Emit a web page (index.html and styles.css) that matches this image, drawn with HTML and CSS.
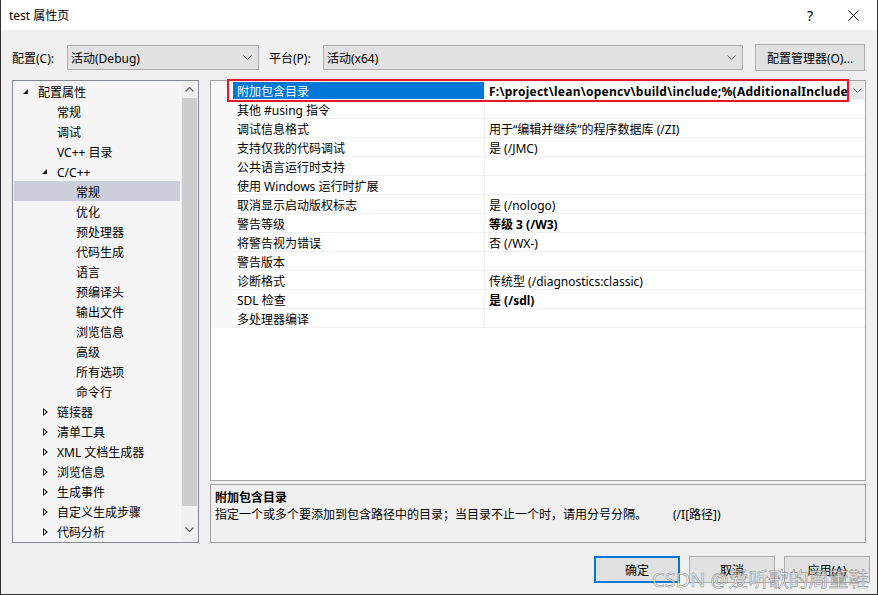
FILE: index.html
```html
<!DOCTYPE html>
<html lang="zh-CN">
<head>
    <meta charset="UTF-8">
    <title>test 属性页</title>
    <link rel="stylesheet" href="styles.css">
</head>
<body>
<div class="window">
    <div class="titlebar">
        <span class="title">test 属性页</span>
        <span class="help">?</span>
        <svg class="close" width="11" height="11" viewBox="0 0 11 11"><path d="M0.5 0.5 L10.5 10.5 M10.5 0.5 L0.5 10.5" stroke="#000" stroke-width="1" fill="none"/></svg>
    </div>

    <div class="toolbar">
        <span class="lbl lbl-config">配置(C):</span>
        <div class="combo combo-config">
            <span>活动(Debug)</span>
            <svg width="9" height="5" viewBox="0 0 9 5"><path d="M0.5 0.5 L4.5 4.5 L8.5 0.5" stroke="#606060" fill="none"/></svg>
        </div>
        <span class="lbl lbl-platform">平台(P):</span>
        <div class="combo combo-platform">
            <span>活动(x64)</span>
            <svg width="9" height="5" viewBox="0 0 9 5"><path d="M0.5 0.5 L4.5 4.5 L8.5 0.5" stroke="#606060" fill="none"/></svg>
        </div>
        <button class="btn btn-manager">配置管理器(O)...</button>
    </div>

    <div class="main">
        <div class="tree">
            <ul class="tree-list">
                <li class="node lv0"><span class="arrow open"></span>配置属性</li>
                <li class="node lv1"><span class="arrow"></span>常规</li>
                <li class="node lv1"><span class="arrow"></span>调试</li>
                <li class="node lv1"><span class="arrow"></span>VC++ 目录</li>
                <li class="node lv1"><span class="arrow open"></span>C/C++</li>
                <li class="node lv2 selected"><span class="arrow"></span>常规</li>
                <li class="node lv2"><span class="arrow"></span>优化</li>
                <li class="node lv2"><span class="arrow"></span>预处理器</li>
                <li class="node lv2"><span class="arrow"></span>代码生成</li>
                <li class="node lv2"><span class="arrow"></span>语言</li>
                <li class="node lv2"><span class="arrow"></span>预编译头</li>
                <li class="node lv2"><span class="arrow"></span>输出文件</li>
                <li class="node lv2"><span class="arrow"></span>浏览信息</li>
                <li class="node lv2"><span class="arrow"></span>高级</li>
                <li class="node lv2"><span class="arrow"></span>所有选项</li>
                <li class="node lv2"><span class="arrow"></span>命令行</li>
                <li class="node lv1"><span class="arrow closed"></span>链接器</li>
                <li class="node lv1"><span class="arrow closed"></span>清单工具</li>
                <li class="node lv1"><span class="arrow closed"></span>XML 文档生成器</li>
                <li class="node lv1"><span class="arrow closed"></span>浏览信息</li>
                <li class="node lv1"><span class="arrow closed"></span>生成事件</li>
                <li class="node lv1"><span class="arrow closed"></span>自定义生成步骤</li>
                <li class="node lv1"><span class="arrow closed"></span>代码分析</li>
            </ul>
            <div class="vscroll">
                <svg class="sb-arrow" width="9" height="5" viewBox="0 0 9 5"><path d="M0.5 4.5 L4.5 0.5 L8.5 4.5" stroke="#606060" stroke-width="1.3" fill="none"/></svg>
                <div class="sb-thumb"></div>
                <svg class="sb-arrow" width="9" height="5" viewBox="0 0 9 5"><path d="M0.5 0.5 L4.5 4.5 L8.5 0.5" stroke="#606060" stroke-width="1.3" fill="none"/></svg>
            </div>
        </div>

        <div class="right">
            <div class="grid">
                <div class="prop active">
                    <span class="gutter"></span>
                    <span class="name">附加包含目录</span>
                    <span class="value bold">
                        <span class="value-text">F:\project\lean\opencv\build\include;%(AdditionalInclude</span>
                        <span class="drop"><svg width="9" height="5" viewBox="0 0 9 5"><path d="M0.5 0.5 L4.5 4.5 L8.5 0.5" stroke="#606060" fill="none"/></svg></span>
                    </span>
                </div>
                <div class="prop"><span class="gutter"></span><span class="name">其他 #using 指令</span><span class="value"></span></div>
                <div class="prop"><span class="gutter"></span><span class="name">调试信息格式</span><span class="value">用于“编辑并继续”的程序数据库 (/ZI)</span></div>
                <div class="prop"><span class="gutter"></span><span class="name">支持仅我的代码调试</span><span class="value">是 (/JMC)</span></div>
                <div class="prop"><span class="gutter"></span><span class="name">公共语言运行时支持</span><span class="value"></span></div>
                <div class="prop"><span class="gutter"></span><span class="name">使用 Windows 运行时扩展</span><span class="value"></span></div>
                <div class="prop"><span class="gutter"></span><span class="name">取消显示启动版权标志</span><span class="value">是 (/nologo)</span></div>
                <div class="prop"><span class="gutter"></span><span class="name">警告等级</span><span class="value bold">等级 3 (/W3)</span></div>
                <div class="prop"><span class="gutter"></span><span class="name">将警告视为错误</span><span class="value">否 (/WX-)</span></div>
                <div class="prop"><span class="gutter"></span><span class="name">警告版本</span><span class="value"></span></div>
                <div class="prop"><span class="gutter"></span><span class="name">诊断格式</span><span class="value">传统型 (/diagnostics:classic)</span></div>
                <div class="prop"><span class="gutter"></span><span class="name">SDL 检查</span><span class="value bold">是 (/sdl)</span></div>
                <div class="prop"><span class="gutter"></span><span class="name">多处理器编译</span><span class="value"></span></div>
                <div class="highlight"></div>
            </div>
            <div class="desc">
                <div class="desc-title">附加包含目录</div>
                <div class="desc-text">指定一个或多个要添加到包含路径中的目录；当目录不止一个时，请用分号分隔。<span class="switch">(/I[路径])</span></div>
            </div>
        </div>
    </div>

    <div class="footer">
        <button class="btn btn-ok">确定</button>
        <button class="btn">取消</button>
        <button class="btn">应用(A)</button>
    </div>

    <div class="watermark">CSDN @爱听歌的周董鞋</div>
</div>
</body>
</html>
```

FILE: styles.css
```css
* {
    box-sizing: border-box;
}
body {
    margin: 0;
    font-family: "Noto Sans", "Noto Sans CJK SC", sans-serif;
    font-size: 12px;
    color: #000;
}
.window {
    position: relative;
    width: 878px;
    height: 595px;
    background: #f0f0f0;
    border-left: 1px solid #2e2e2e;
    border-right: 1px solid #2e2e2e;
    border-bottom: 1px solid #2e2e2e;
    overflow: hidden;
}

/* title bar */
.titlebar {
    height: 30px;
    background: #fff;
    display: flex;
    align-items: center;
    padding-left: 8px;
}
.title {
    flex: 1;
}
.help {
    font-size: 14px;
    margin-right: 35px;
}
.close {
    margin-right: 18px;
}

/* toolbar */
.toolbar {
    display: flex;
    align-items: center;
    margin-top: 14px;
    height: 27px;
    padding-left: 11px;
}
.lbl-config {
    width: 55px;
}
.lbl-platform {
    width: 54px;
    margin-left: 10px;
}
.combo {
    height: 25px;
    background: #e1e1e1;
    border: 1px solid #adadad;
    display: flex;
    align-items: center;
    justify-content: space-between;
    padding: 0 6px 0 3px;
}
.combo-config {
    width: 192px;
}
.combo-platform {
    width: 420px;
}
.btn {
    font-family: inherit;
    font-size: 12px;
    color: #000;
    background: #e1e1e1;
    border: 1px solid #adadad;
    padding: 0;
    height: 27px;
}
.btn-manager {
    width: 110px;
    margin-left: 12px;
}

/* main area */
.main {
    display: flex;
    margin-top: 9px;
    padding-left: 11px;
    height: 463px;
}
.tree {
    width: 187px;
    height: 463px;
    border: 1px solid #828790;
    background: #f5f5f5;
    display: flex;
}
.tree-list {
    list-style: none;
    margin: 0;
    padding: 0;
    flex: 1;
}
.node {
    height: 20px;
    line-height: 17px;
    padding-top: 3px;
    display: flex;
    white-space: nowrap;
}
.node.selected {
    background: #cccedb;
    margin: 0 1px;
}
.lv0 { padding-left: 8px; }
.lv1 { padding-left: 27px; }
.lv2 { padding-left: 46px; }
.lv2.selected { padding-left: 45px; }
.arrow {
    width: 17px;
    height: 17px;
    position: relative;
    flex: none;
}
.arrow.open::before {
    content: "";
    position: absolute;
    left: 2px;
    top: 5px;
    border-left: 5px solid transparent;
    border-bottom: 5px solid #1e1e1e;
}
.arrow.closed::before {
    content: "";
    position: absolute;
    left: 3px;
    top: 4px;
    width: 0;
    height: 0;
    border-top: 4px solid transparent;
    border-bottom: 4px solid transparent;
    border-left: 5px solid #1e1e1e;
}
.arrow.closed::after {
    content: "";
    position: absolute;
    left: 4px;
    top: 6px;
    border-top: 2px solid transparent;
    border-bottom: 2px solid transparent;
    border-left: 2px solid #f5f5f5;
}
.vscroll {
    width: 17px;
    background: #f0f0f0;
    display: flex;
    flex-direction: column;
    align-items: center;
}
.sb-arrow {
    margin: 6px 0;
}
.sb-thumb {
    width: 15px;
    height: 408px;
    background: #cdcdcd;
    margin-bottom: 15px;
}

/* property grid */
.right {
    margin-left: 11px;
    width: 656px;
    display: flex;
    flex-direction: column;
}
.grid {
    position: relative;
    height: 401px;
    background: #fff;
    border: 1px solid #a0a0a0;
}
.prop {
    display: flex;
    height: 19px;
    white-space: nowrap;
}
.gutter {
    width: 21px;
    background: #f7f7f7;
    flex: none;
}
.name {
    width: 253px;
    flex: none;
    padding-left: 5px;
    padding-top: 3px;
    line-height: 15px;
    border-bottom: 1px solid #f0f0f0;
    border-right: 1px solid #f0f0f0;
}
.value {
    flex: 1;
    padding-left: 4px;
    padding-top: 3px;
    line-height: 15px;
    border-bottom: 1px solid #f0f0f0;
    overflow: hidden;
}
.bold {
    font-weight: bold;
}
.prop.active .name {
    background: #0078d7;
    color: #fff;
    margin-left: 1px;
    width: 252px;
    padding-left: 4px;
    padding-top: 2px;
    border-bottom-color: #fff;
    border-top: 1px solid #fff;
}
.prop.active .value {
    display: flex;
    padding-top: 0;
    padding-right: 1px;
}
.value-text {
    flex: 1;
    overflow: hidden;
    padding-top: 3px;
    letter-spacing: 0.25px;
}
.drop {
    width: 15px;
    height: 18px;
    background: #e9e9e9;
    border-left: 1px solid #d4d4d4;
    display: flex;
    align-items: center;
    justify-content: center;
    flex: none;
}
.highlight {
    position: absolute;
    left: 16px;
    top: -2px;
    width: 622px;
    height: 23px;
    border: 2px solid #e3162a;
}

/* description pane */
.desc {
    margin-top: 3px;
    height: 59px;
    border: 1px solid #a0a0a0;
    background: #f0f0f0;
    padding: 4px 4px 0;
    line-height: 17px;
}
.desc-title {
    font-weight: bold;
}
.switch {
    margin-left: 26px;
}

/* buttons */
.footer {
    display: flex;
    justify-content: flex-end;
    gap: 9px;
    margin-top: 13px;
    padding-right: 7px;
}
.footer .btn {
    width: 86px;
}
.btn-ok {
    border: 2px solid #0078d7;
}

.watermark {
    position: absolute;
    left: 651px;
    top: 564px;
    font-size: 20px;
    color: rgba(255, 255, 255, 0.65);
    -webkit-text-stroke: 0.6px rgba(90, 90, 90, 0.65);
    white-space: nowrap;
}
```
